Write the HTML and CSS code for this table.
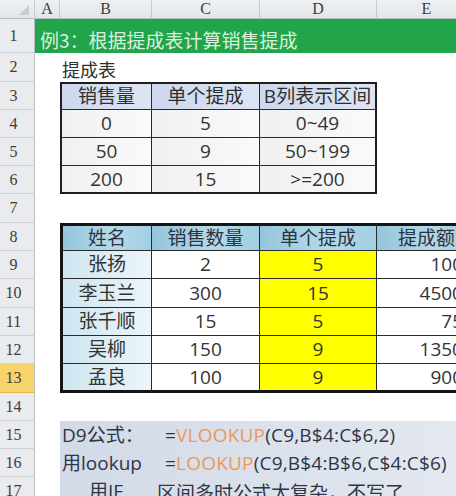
FILE: index.html
```html
<!DOCTYPE html>
<html lang="zh">
<head>
<meta charset="utf-8">
<title>提成计算</title>
<link rel="stylesheet" href="styles.css">
</head>
<body>
<div class="sheet">
  <div class="corner"><span class="tri"></span></div>
  <div class="colh">A</div>
  <div class="colh">B</div>
  <div class="colh">C</div>
  <div class="colh">D</div>
  <div class="colh">E</div>

  <div class="rowh">1</div>
  <div class="title span5">例3：根据提成表计算销售提成</div>

  <div class="rowh">2</div>
  <div class="cell"></div>
  <div class="cell caption span4">提成表</div>

  <div class="rowh">3</div>
  <div class="cell"></div>
  <div class="t1 th first top">销售量</div>
  <div class="t1 th top">单个提成</div>
  <div class="t1 th top last">B列表示区间</div>
  <div class="cell"></div>

  <div class="rowh">4</div>
  <div class="cell"></div>
  <div class="t1 td first">0</div>
  <div class="t1 td">5</div>
  <div class="t1 td last">0~49</div>
  <div class="cell"></div>

  <div class="rowh">5</div>
  <div class="cell"></div>
  <div class="t1 td first">50</div>
  <div class="t1 td">9</div>
  <div class="t1 td last">50~199</div>
  <div class="cell"></div>

  <div class="rowh">6</div>
  <div class="cell"></div>
  <div class="t1 td first bottom">200</div>
  <div class="t1 td bottom">15</div>
  <div class="t1 td last bottom">&gt;=200</div>
  <div class="cell"></div>

  <div class="rowh">7</div>
  <div class="cell span5"></div>

  <div class="rowh">8</div>
  <div class="cell"></div>
  <div class="t2 hd first top">姓名</div>
  <div class="t2 hd top">销售数量</div>
  <div class="t2 hd top">单个提成</div>
  <div class="t2 hd top">提成额</div>

  <div class="rowh">9</div>
  <div class="cell"></div>
  <div class="t2 name first">张扬</div>
  <div class="t2">2</div>
  <div class="t2 yel">5</div>
  <div class="t2 amt">100</div>

  <div class="rowh">10</div>
  <div class="cell"></div>
  <div class="t2 name first">李玉兰</div>
  <div class="t2">300</div>
  <div class="t2 yel">15</div>
  <div class="t2 amt">4500</div>

  <div class="rowh">11</div>
  <div class="cell"></div>
  <div class="t2 name first">张千顺</div>
  <div class="t2">15</div>
  <div class="t2 yel">5</div>
  <div class="t2 amt">75</div>

  <div class="rowh">12</div>
  <div class="cell"></div>
  <div class="t2 name first">吴柳</div>
  <div class="t2">150</div>
  <div class="t2 yel">9</div>
  <div class="t2 amt">1350</div>

  <div class="rowh active">13</div>
  <div class="cell"></div>
  <div class="t2 name first bottom">孟良</div>
  <div class="t2 bottom">100</div>
  <div class="t2 yel bottom">9</div>
  <div class="t2 amt bottom">900</div>

  <div class="rowh">14</div>
  <div class="cell span5"></div>

  <div class="rowh">15</div>
  <div class="cell"></div>
  <div class="fx span4"><span class="lab">D9公式：</span><span class="code">=<span class="fn">VLOOKUP</span>(C9,B$4:C$6,2)</span></div>

  <div class="rowh">16</div>
  <div class="cell"></div>
  <div class="fx span4"><span class="lab">用lookup</span><span class="code">=<span class="fn">LOOKUP</span>(C9,B$4:B$6,C$4:C$6)</span></div>

  <div class="rowh">17</div>
  <div class="cell"></div>
  <div class="fx span4"><span class="lab mid">用IF</span><span class="note">区间多时公式太复杂，不写了</span></div>
</div>
</body>
</html>
```

FILE: styles.css
```css
html, body {
  margin: 0;
  padding: 0;
  background: #ffffff;
}

body {
  width: 456px;
  height: 496px;
  overflow: hidden;
  font-family: "Open Sans", "Noto Sans CJK SC", sans-serif;
  font-size: 19px;
  color: #333333;
}

.sheet {
  display: grid;
  grid-template-columns: 35px 25px 92px 108px 117px 100px;
  grid-template-rows: 19px 34px 29px 28px 28px 28px 28px 29px 28px 28px 29px 28px 28px 29px 28px 28px 28px 28px;
  width: 481px;
}

.span5 { grid-column: span 5; }
.span4 { grid-column: span 4; }

.corner {
  position: relative;
  background: linear-gradient(#eef0f3, #e2e5ea);
  border-right: 1px solid #c6cad0;
  border-bottom: 1px solid #b9bdc3;
}

.tri {
  position: absolute;
  right: 5px;
  bottom: 3px;
  width: 0;
  height: 0;
  border-left: 10px solid transparent;
  border-bottom: 10px solid #c9ccd1;
}

.colh {
  display: flex;
  align-items: center;
  justify-content: center;
  background: linear-gradient(#eef0f3, #e2e5ea);
  border-right: 1px solid #c6cad0;
  border-bottom: 1px solid #b9bdc3;
  font-family: "Liberation Serif", serif;
  font-size: 16px;
  color: #3c3c3c;
  line-height: 1;
}

.rowh {
  display: flex;
  align-items: center;
  justify-content: center;
  padding-right: 7px;
  background: #e9ebee;
  border-right: 1px solid #b9bdc3;
  border-bottom: 1px solid #cdd0d5;
  font-family: "Liberation Serif", serif;
  font-size: 16px;
  color: #3c3c3c;
  line-height: 1;
}

.rowh.active {
  background: #f7d36c;
  border-bottom-color: #e3b94c;
}

.cell {
  background: #ffffff;
}

.title {
  display: flex;
  align-items: center;
  padding: 6px 0 0 5px;
  background: #22a44b;
  color: #d9f2de;
  font-family: "Noto Sans CJK SC", sans-serif;
  font-size: 19px;
  line-height: 1;
  white-space: nowrap;
}

.caption {
  display: flex;
  align-items: center;
  padding: 2px 0 0 2px;
  font-family: "Noto Sans CJK SC", sans-serif;
  font-size: 18px;
  line-height: 1;
  color: #2e2e2e;
}

/* table 1 */
.t1 {
  display: flex;
  align-items: center;
  justify-content: center;
  border-right: 1px solid #2a2a2a;
  border-bottom: 1px solid #2a2a2a;
  line-height: 1;
  white-space: nowrap;
}

.t1.th {
  background: linear-gradient(to right, #cdd8ee, #dde5f3);
  color: #2e2e2e;
}

.t1.td {
  background: linear-gradient(to right, #f0f0f0, #fafafa);
}

.t1.first { border-left: 2px solid #1e1e1e; }
.t1.top { border-top: 2px solid #1e1e1e; }
.t1.last { border-right: 2px solid #1e1e1e; }
.t1.bottom { border-bottom: 2px solid #1e1e1e; }

/* table 2 */
.t2 {
  display: flex;
  align-items: center;
  justify-content: center;
  background: #ffffff;
  border-right: 1px solid #2a2a2a;
  border-bottom: 1px solid #2a2a2a;
  line-height: 1;
  white-space: nowrap;
}

.t2.hd {
  background: linear-gradient(to right, #94c5db, #b4d9e8 55%, #a3cfe2);
  color: #2b3540;
}

.t2.name {
  background: linear-gradient(to right, #cfe6f0, #ecf5f9);
}

.t2.yel {
  background: #ffff00;
}

.t2.amt {
  justify-content: flex-end;
  padding-right: 13px;
}

.t2.first { border-left: 3px solid #141414; }
.t2.top { border-top: 3px solid #141414; }
.t2.bottom { border-bottom: 3px solid #141414; }

/* formula notes */
.fx {
  display: flex;
  align-items: center;
  background: linear-gradient(to right, #d2dae7, #e4e9f0);
  color: #2f3547;
  line-height: 1;
  white-space: nowrap;
}

.lab {
  width: 103px;
  padding-left: 2px;
  flex: none;
}

.lab.mid {
  width: 92px;
  padding-left: 0;
  text-align: center;
}

.code {
  letter-spacing: 0.2px;
}

.fn {
  color: #e9995c;
}

.note {
  padding-left: 5px;
  font-family: "Noto Sans CJK SC", sans-serif;
}
```
